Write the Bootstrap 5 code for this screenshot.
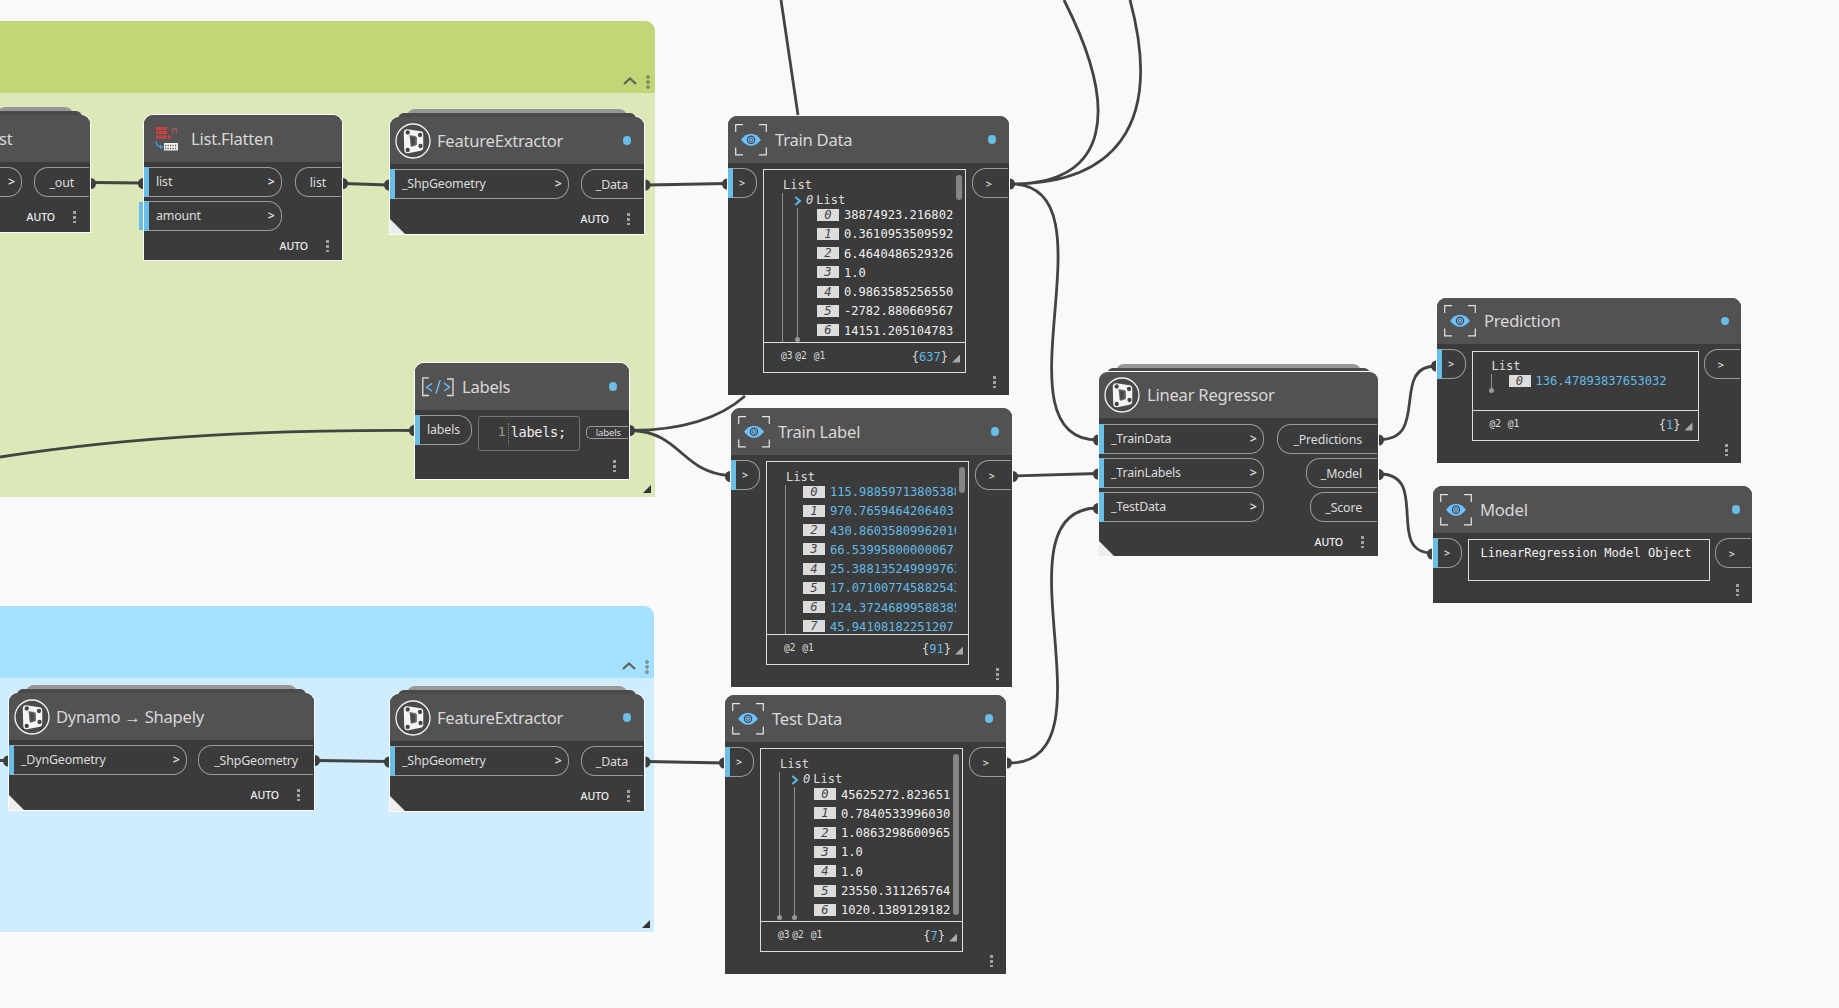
<!DOCTYPE html>
<html lang="en">
<head>
<meta charset="utf-8">
<title>Dynamo graph</title>
<link href="https://cdn.jsdelivr.net/npm/bootstrap@5.3.0/dist/css/bootstrap.min.css" rel="stylesheet">
<style>
body{background:#f9f9f9;font-family:"Noto Sans","Open Sans",sans-serif;overflow:hidden}
.board{width:1839px;height:1008px;background:#f9f9f9}
.mono{font-family:"DejaVu Sans Mono","Liberation Mono",monospace}
/* groups */
.zone{position:absolute;left:0;border-radius:0 10px 0 0;overflow:hidden}
.zone-head{height:72px;padding:0 5px 4px 0;gap:9px}
.zone-a{top:21px;width:655px;height:476px;background:#dce8b8}
.zone-a .zone-head{background:#c1d676}
.zone-b{top:606px;width:654px;height:326px;background:#d0edff}
.zone-b .zone-head{background:#a4e1ff}
.zone-grip{position:absolute;right:4px;bottom:4px;width:8px;height:8px;background:#333;clip-path:polygon(100% 0,100% 100%,0 100%)}
.wires{position:absolute;left:0;top:0;fill:none;stroke:#434343;stroke-width:2.8}
.wires .ends{fill:#3f3f3f;stroke:none}
/* nodes */
.node{position:absolute;background:#3b3b3b;color:#dcdcdc;border-radius:9px 9px 0 0;font-size:12.4px;letter-spacing:-.15px}
.node-lit{box-shadow:0 0 0 1px #fcfcfc}
.node-head{height:47px;background:#525252;border-radius:9px 9px 0 0;padding:0 13px 0 7px;position:relative}
.node-name{font-size:16.6px;letter-spacing:-.25px;line-height:24px;white-space:nowrap;color:#d8d8d8}
.dot{width:8.5px;height:8.5px;border-radius:50%;background:#69bde6}
.tabs::before,.tabs::after{content:"";position:absolute;border-radius:8px 8px 0 0;z-index:-1}
.tabs{isolation:isolate}
.tabs::before{left:17px;right:17px;top:-8px;height:8px;background:#979797}
.tabs::after{left:8px;right:8px;top:-4px;height:6px;background:#4b4b4b}
.fold{position:absolute;left:0;bottom:0;width:15px;height:15px;background:#eee;clip-path:polygon(0 0,100% 100%,0 100%)}
.port{height:30px;border:1px solid #9a9a9a;line-height:27px;position:relative;white-space:nowrap}
.p-in{border-left:0;border-radius:0 14px 14px 0;padding:0 6px 0 12px}
.p-in::before{content:"";position:absolute;left:0;top:-1px;bottom:-1px;width:5px;background:#69bde6}
.p-out{border-right:0;border-radius:14px 0 0 14px;margin-right:1px;padding-right:15px;text-align:right;line-height:29px}
.gt{font-size:12.5px;font-weight:600;letter-spacing:0}
.tiny{width:29px;padding:0 0 0 11px}
.tiny-out{width:36px;padding:0 16px 0 0}
.tiny .gt,.tiny-out .gt{font-size:11px}
.ports{padding-top:5px}
.auto{font-size:10.6px;font-weight:500;color:#eee;letter-spacing:-.1px;line-height:14px}
.dots{width:3px;height:13px;background:radial-gradient(circle,#a3a3a3 1.4px,transparent 1.8px) 0 0/3px 5px}
.foot{padding:13px 14px 0 0;gap:18px}
.foot-alone{position:absolute;right:13px;bottom:7px}
/* watch previews */
.view{border:1px solid #dedede;position:relative;font-size:12.1px;letter-spacing:0;margin-top:1px}
.view-main{overflow:hidden;position:relative;padding-top:8px}
.view-foot{border-top:1px solid #dedede;padding:0 5px 2px 17px;height:30px;font-size:12px}
.levels{font-size:9.6px;letter-spacing:-.1px;gap:3px}
.ln{line-height:15px;height:15px}
.kin{border-left:1px solid #8f8f8f;margin-left:18px;position:relative}
.stop::after{content:"";position:absolute;left:-3px;bottom:-4px;width:5px;height:5px;border-radius:50%;background:#999}
.item{height:19.27px;line-height:14px;white-space:nowrap;color:#f0f0f0}
.idx{width:22px;height:12px;line-height:12px;margin-top:.5px;background:#dcdcdc;color:#444;font-style:italic;text-align:center;margin-right:5px;flex:none}
.num .item{color:#62bbe8}
.blue{color:#62bbe8}
.clip{width:126px;overflow:hidden}
.bar{position:absolute;width:6px;right:3px;border-radius:3px;background:#858585}
.corner{width:8px;height:8px;background:#aaa;clip-path:polygon(100% 0,100% 100%,0 100%)}
.watch{width:281px;height:279px}
.watch .view{width:203px;height:204px}
.watch .view-main{height:172px}
/* places on the canvas */
#n-st{left:-20px;top:115px;width:110px;height:117px}
#n-flat{left:144px;top:115px;width:198px;height:145px}
#n-fe1{left:390px;top:117px;width:254px;height:117px}
#n-fe2{left:390px;top:694px;width:254px;height:117px}
#n-dyn{left:9px;top:693px;width:305px;height:117px}
#n-lab{left:415px;top:363px;width:214px;height:116px}
#n-tr{left:728px;top:116px}
#n-tl{left:731px;top:408px}
#n-te{left:725px;top:695px}
#n-lr{left:1099px;top:372px;width:279px;height:184px}
#n-pr{left:1437px;top:298px;width:304px;height:165px}
#n-mo{left:1433px;top:486px;width:319px;height:117px}
#n-lr .node-head{border-top:1px solid #fcfcfc;margin-top:-1px}
#n-pr .view{width:227px;height:90px}
#n-pr .view-main{height:58px}
#n-mo .view{width:242px;height:42px;padding:6px 0 0 12px;color:#f0f0f0;line-height:15px}
</style>
<script src="https://cdn.jsdelivr.net/npm/bootstrap@5.3.0/dist/js/bootstrap.bundle.min.js"></script>
</head>
<body>
<svg width="0" height="0" class="position-absolute">
<symbol id="i-dyn" viewBox="0 0 36 36"><circle cx="18" cy="18" r="17" fill="#4a4a4a" stroke="#f4f4f4" stroke-width="1.3"/><path d="M12 9.5L25 11.5V24.5L12.500 27Z" fill="none" stroke="#f4f4f4" stroke-width="6.5" stroke-linejoin="round"/><path d="M14.500 12.500L21 13.500V22L16.500 23.500" fill="#555" stroke="#777" stroke-width=".8"/><path d="M16 14.500H19.500V21.500H16Z" fill="#4a4a4a"/><g fill="#f4f4f4" stroke="#444" stroke-width="1.300"><circle cx="12.700" cy="9.500" r="1.500" fill="#444"/><circle cx="25" cy="12" r="1.500" fill="#444"/><circle cx="25.500" cy="23" r="1.500" fill="#444"/><circle cx="12.700" cy="27" r="1.500" fill="#444"/></g></symbol>
<symbol id="i-eye" viewBox="0 0 32 32"><path d="M.7 8V.7H8M24 .7H31.300V8M31.300 23.500V30.800H24M8 30.800H.7V23.500" fill="none" stroke="#e4e4e4" stroke-width="1.200"/><path d="M6 15.700Q10.500 9.700 16 9.700T26 15.700Q21.500 21.700 16 21.700T6 15.700Z" fill="#6ec1ff"/><circle cx="16" cy="15.700" r="3.600" fill="none" stroke="#444" stroke-width="1.200"/><circle cx="16" cy="15.700" r="1.700" fill="none" stroke="#555" stroke-width=".9"/></symbol>
<symbol id="i-code" viewBox="0 0 32 20"><path d="M7 .8H.8V18.500H7M25 2H31V18.500H25" fill="none" stroke="#ddd" stroke-width="1.300"/><path d="M10 6.500L4.500 10.300L10 14M22 6L27.500 10.300L22 14M18.200 3L14 16.500" fill="none" stroke="#6ec1ff" stroke-width="1.300"/></symbol>
<symbol id="i-flat" viewBox="0 0 24 24"><path d="M1 1.500H12M1 5.500H12M1 10H12" stroke="#cf4040" stroke-width="3"/><path d="M3 1.500H3.800M7 1.500H7.800M11 1.500H11.300M3 5.500H3.800M7 5.500H7.800M3 10H3.800M7 10H7.800" stroke="#5d4444" stroke-width="1.200"/><path d="M13 8.500H16V11.500H13Z" fill="#cf4040"/><path d="M17.500 7V1.800H21.300V7" fill="none" stroke="#9a5656" stroke-width="1.400"/><path d="M1 14Q1.500 20 7 20" fill="none" stroke="#4d93cf" stroke-width="1.500"/><path d="M5 17.500L8.500 20L5 22.500Z" fill="#4d93cf"/><path d="M9 16H23V23.500H9Z" fill="#f2f2f2"/><path d="M10 18.500H22M10 21.500H22" stroke="#555" stroke-width="1.600" stroke-dasharray="1.200 1.300"/></symbol>
<symbol id="i-up" viewBox="0 0 14 8"><path d="M1 7L7 1.500L13 7" fill="none" stroke="#606060" stroke-width="2.200"/></symbol>
<symbol id="i-grip" viewBox="0 0 4 14"><g fill="none" stroke="#5a5a5a" stroke-width=".9"><circle cx="2" cy="2" r="1.300"/><circle cx="2" cy="7" r="1.300"/><circle cx="2" cy="12" r="1.300"/></g></symbol>
<symbol id="i-chev" viewBox="0 0 8 10"><path d="M1.300 1L6 5L1.300 9" fill="none" stroke="#5cb8e6" stroke-width="2"/></symbol>
</svg>

<main class="board position-relative overflow-hidden">
  <section class="zone zone-a"><div class="zone-head d-flex justify-content-end align-items-end"><svg width="14" height="8" class="mb-1"><use href="#i-up"/></svg><svg width="4" height="14"><use href="#i-grip"/></svg></div><i class="zone-grip"></i></section>
  <section class="zone zone-b"><div class="zone-head d-flex justify-content-end align-items-end"><svg width="14" height="8" class="mb-1"><use href="#i-up"/></svg><svg width="4" height="14"><use href="#i-grip"/></svg></div><i class="zone-grip"></i></section>

  <svg class="wires" width="1839" height="1008">
    <path d="M93 182.500L142 183M344 183.500L388 185M647 185L727 183.500M0 457C140 435 280 430 413 430.500M632 430.500C680 430 718 420 745 396M632 430.500C680 432 683 473 729 475.500M0 760.500H8M317 760.500L388 761.500M647 761.500L724 763M781 0L798 115M1011 184C1120 184 990 440 1098 440M1011 184C1110 184 1120 110 1064 0M1011 184C1110 184 1165 130 1130 0M1014 476L1098 473.500M1009 763C1120 763 990 508 1098 508M1380 439.500C1430 439.500 1390 366 1436 366M1380 474C1430 474 1385 553 1432 553"/>
    <g class="ends">
      <path d="M91 178A5 5.500 0 0 1 91 189M343 178A5 5.500 0 0 1 343 189M645.500 179.500A5 5.500 0 0 1 645.500 190.500M630 425A5 5.500 0 0 1 630 436M315 755A5 5.500 0 0 1 315 766M645.500 756.500A5 5.500 0 0 1 645.500 767.500M1010 178.500A5 5.500 0 0 1 1010 189.500M1013 471A5 5.500 0 0 1 1013 482M1007 757.500A5 5.500 0 0 1 1007 768.500M1379 434.500A5 5.500 0 0 1 1379 445.500M1379 469A5 5.500 0 0 1 1379 480"/>
      <path d="M143 178A5 5.500 0 0 0 143 189M389 179.500A5 5.500 0 0 0 389 190.500M727 178.500A5 5.500 0 0 0 727 189.500M414 425A5 5.500 0 0 0 414 436M730 471A5 5.500 0 0 0 730 482M8 755.500A5 5.500 0 0 0 8 766.500M389 756.500A5 5.500 0 0 0 389 767.500M724 757.500A5 5.500 0 0 0 724 768.500M1098 434.500A5 5.500 0 0 0 1098 445.500M1098 468.500A5 5.500 0 0 0 1098 479.500M1098 503A5 5.500 0 0 0 1098 514M1436 360.500A5 5.500 0 0 0 1436 371.500M1432 548.500A5 5.500 0 0 0 1432 559.500"/>
      <path d="M139 202H143V230H139Z" fill="#69bde6"/>
    </g>
  </svg>

  <article class="node node-lit tabs" id="n-st">
    <header class="node-head d-flex align-items-center"><span class="node-name ms-2 ps-1">st</span></header>
    <div class="ports d-flex justify-content-between">
      <div class="port p-in ps-4" style="width:42px"><span class="gt ms-1">&gt;</span></div>
      <div class="port p-out" style="width:55px">_out</div>
    </div>
    <footer class="foot d-flex justify-content-end"><span class="auto">AUTO</span><i class="dots"></i></footer>
  </article>

  <article class="node node-lit" id="n-flat">
    <header class="node-head d-flex align-items-center"><svg width="24" height="24" class="ms-1"><use href="#i-flat"/></svg><span class="node-name" style="margin-left:12px">List.Flatten</span></header>
    <div class="ports d-flex justify-content-between">
      <div class="d-flex flex-column gap-1">
        <div class="port p-in d-flex justify-content-between" style="width:138px">list<span class="gt">&gt;</span></div>
        <div class="port p-in d-flex justify-content-between" style="width:138px">amount<span class="gt">&gt;</span></div>
      </div>
      <div class="port p-out" style="width:46px">list</div>
    </div>
    <footer class="foot d-flex justify-content-end" style="padding-top:8px;padding-right:13px"><span class="auto">AUTO</span><i class="dots"></i></footer>
  </article>

  <article class="node node-lit tabs" id="n-fe1">
    <header class="node-head d-flex align-items-center"><svg width="36" height="36" style="margin-left:-2px"><use href="#i-dyn"/></svg><span class="node-name" style="margin-left:6px">FeatureExtractor</span><i class="dot ms-auto"></i></header>
    <div class="ports d-flex justify-content-between">
      <div class="port p-in d-flex justify-content-between" style="width:179px">_ShpGeometry<span class="gt">&gt;</span></div>
      <div class="port p-out" style="width:62px">_Data</div>
    </div>
    <footer class="foot d-flex justify-content-end"><span class="auto">AUTO</span><i class="dots"></i></footer><i class="fold"></i>
  </article>

  <article class="node node-lit" id="n-lab">
    <header class="node-head d-flex align-items-center" style="padding-right:12px"><svg width="32" height="20"><use href="#i-code"/></svg><span class="node-name" style="margin-left:8px">Labels</span><i class="dot ms-auto"></i></header>
    <div class="ports d-flex">
      <div class="port p-in" style="width:57px">labels</div>
      <div class="mono d-flex border-secondary" style="margin:1px 0 0 6px;width:103px;height:35px;border:1px solid #8d8d8d;border-radius:3px;padding:6px 0 0 19px;font-size:14.400px;line-height:18px;letter-spacing:.1px"><span style="color:#a09a8c;font-size:13px">1</span><span style="border-left:1px dotted #888;margin-left:2px;padding-left:2px;height:22px;font-size:13.600px;letter-spacing:-.3px;color:#eee">labels;</span></div>
      <div class="port p-out" style="margin:11px 1px 0 6px;width:42px;height:13px;line-height:11px;font-size:9.600px;border-radius:5px 0 0 5px;padding-right:7px">labels</div>
    </div>
    <i class="dots foot-alone"></i>
  </article>

  <article class="node node-lit tabs" id="n-dyn">
    <header class="node-head d-flex align-items-center"><svg width="36" height="36" style="margin-left:-2px"><use href="#i-dyn"/></svg><span class="node-name" style="margin-left:6px">Dynamo → Shapely</span></header>
    <div class="ports d-flex justify-content-between">
      <div class="port p-in d-flex justify-content-between" style="width:178px">_DynGeometry<span class="gt">&gt;</span></div>
      <div class="port p-out" style="width:115px">_ShpGeometry</div>
    </div>
    <footer class="foot d-flex justify-content-end"><span class="auto">AUTO</span><i class="dots"></i></footer><i class="fold"></i>
  </article>

  <article class="node node-lit tabs" id="n-fe2">
    <header class="node-head d-flex align-items-center"><svg width="36" height="36" style="margin-left:-2px"><use href="#i-dyn"/></svg><span class="node-name" style="margin-left:6px">FeatureExtractor</span><i class="dot ms-auto"></i></header>
    <div class="ports d-flex justify-content-between">
      <div class="port p-in d-flex justify-content-between" style="width:179px">_ShpGeometry<span class="gt">&gt;</span></div>
      <div class="port p-out" style="width:62px">_Data</div>
    </div>
    <footer class="foot d-flex justify-content-end"><span class="auto">AUTO</span><i class="dots"></i></footer><i class="fold"></i>
  </article>

  <article class="node watch" id="n-tr">
    <header class="node-head d-flex align-items-center"><svg width="32" height="32"><use href="#i-eye"/></svg><span class="node-name ms-2">Train Data</span><i class="dot ms-auto"></i></header>
    <div class="ports d-flex justify-content-between">
      <div class="port p-in tiny"><span class="gt">&gt;</span></div>
      <div class="view mono">
        <div class="view-main">
          <div class="ln" style="padding-left:19px">List</div>
          <div class="kin">
            <div class="ln d-flex align-items-center" style="padding-left:11px"><svg width="8" height="10"><use href="#i-chev"/></svg><i style="margin:0 3px 0 4px">0</i>List</div>
            <div class="kin stop" style="margin-left:14px;padding-left:19px;height:130px">
              <div class="item d-flex"><span class="idx">0</span>38874923.216802</div>
              <div class="item d-flex"><span class="idx">1</span>0.3610953509592</div>
              <div class="item d-flex"><span class="idx">2</span>6.4640486529326</div>
              <div class="item d-flex"><span class="idx">3</span>1.0</div>
              <div class="item d-flex"><span class="idx">4</span>0.9863585256550</div>
              <div class="item d-flex"><span class="idx">5</span>-2782.880669567</div>
              <div class="item d-flex"><span class="idx">6</span>14151.205104783</div>
            </div>
            <div style="height:6px"></div>
          </div>
          <i class="bar" style="top:5px;height:25px"></i>
        </div>
        <div class="view-foot d-flex align-items-center"><span class="levels d-flex"><span>@3</span><span>@2</span><span class="ms-1">@1</span></span><span class="ms-auto">{<span class="blue">637</span>}</span><i class="corner ms-1 mt-1"></i></div>
      </div>
      <div class="port p-out tiny-out"><span class="gt">&gt;</span></div>
    </div>
    <i class="dots foot-alone"></i>
  </article>

  <article class="node watch" id="n-tl">
    <header class="node-head d-flex align-items-center"><svg width="32" height="32"><use href="#i-eye"/></svg><span class="node-name ms-2">Train Label</span><i class="dot ms-auto"></i></header>
    <div class="ports d-flex justify-content-between">
      <div class="port p-in tiny"><span class="gt">&gt;</span></div>
      <div class="view mono">
        <div class="view-main num">
          <div class="ln" style="padding-left:19px">List</div>
          <div class="kin" style="padding-left:17px">
            <div class="item d-flex"><span class="idx">0</span><span class="clip">115.98859713805388</span></div>
            <div class="item d-flex"><span class="idx">1</span><span class="clip">970.7659464206403</span></div>
            <div class="item d-flex"><span class="idx">2</span><span class="clip">430.86035809962010</span></div>
            <div class="item d-flex"><span class="idx">3</span><span class="clip">66.53995800000067</span></div>
            <div class="item d-flex"><span class="idx">4</span><span class="clip">25.388135249999763</span></div>
            <div class="item d-flex"><span class="idx">5</span><span class="clip">17.071007745882543</span></div>
            <div class="item d-flex"><span class="idx">6</span><span class="clip">124.37246899588385</span></div>
            <div class="item d-flex"><span class="idx">7</span><span class="clip">45.94108182251207</span></div>
          </div>
          <i class="bar" style="top:5px;height:26px"></i>
        </div>
        <div class="view-foot d-flex align-items-center"><span class="levels d-flex"><span>@2</span><span class="ms-1">@1</span></span><span class="ms-auto">{<span class="blue">91</span>}</span><i class="corner ms-1 mt-1"></i></div>
      </div>
      <div class="port p-out tiny-out"><span class="gt">&gt;</span></div>
    </div>
    <i class="dots foot-alone"></i>
  </article>

  <article class="node watch" id="n-te">
    <header class="node-head d-flex align-items-center"><svg width="32" height="32"><use href="#i-eye"/></svg><span class="node-name ms-2">Test Data</span><i class="dot ms-auto"></i></header>
    <div class="ports d-flex justify-content-between">
      <div class="port p-in tiny"><span class="gt">&gt;</span></div>
      <div class="view mono">
        <div class="view-main">
          <div class="ln" style="padding-left:19px">List</div>
          <div class="kin stop" style="height:144px">
            <div class="ln d-flex align-items-center" style="padding-left:11px"><svg width="8" height="10"><use href="#i-chev"/></svg><i style="margin:0 3px 0 4px">0</i>List</div>
            <div class="kin stop" style="margin-left:14px;padding-left:19px;padding-top:.7px;height:129px">
              <div class="item d-flex"><span class="idx">0</span>45625272.823651</div>
              <div class="item d-flex"><span class="idx">1</span>0.7840533996030</div>
              <div class="item d-flex"><span class="idx">2</span>1.0863298600965</div>
              <div class="item d-flex"><span class="idx">3</span>1.0</div>
              <div class="item d-flex"><span class="idx">4</span>1.0</div>
              <div class="item d-flex"><span class="idx">5</span>23550.311265764</div>
              <div class="item d-flex"><span class="idx">6</span>1020.1389129182</div>
            </div>
          </div>
          <i class="bar" style="top:5px;height:161px"></i>
        </div>
        <div class="view-foot d-flex align-items-center"><span class="levels d-flex"><span>@3</span><span>@2</span><span class="ms-1">@1</span></span><span class="ms-auto">{<span class="blue">7</span>}</span><i class="corner ms-1 mt-1"></i></div>
      </div>
      <div class="port p-out tiny-out"><span class="gt">&gt;</span></div>
    </div>
    <i class="dots foot-alone"></i>
  </article>

  <article class="node tabs" id="n-lr">
    <header class="node-head d-flex align-items-center"><svg width="36" height="36" style="margin-left:-2px"><use href="#i-dyn"/></svg><span class="node-name" style="margin-left:7px">Linear Regressor</span></header>
    <div class="ports d-flex justify-content-between">
      <div class="d-flex flex-column gap-1" style="padding-top:1px">
        <div class="port p-in d-flex justify-content-between" style="width:165px">_TrainData<span class="gt">&gt;</span></div>
        <div class="port p-in d-flex justify-content-between" style="width:165px">_TrainLabels<span class="gt">&gt;</span></div>
        <div class="port p-in d-flex justify-content-between" style="width:165px">_TestData<span class="gt">&gt;</span></div>
      </div>
      <div class="d-flex flex-column gap-1 align-items-end" style="padding-top:1px">
        <div class="port p-out" style="width:100px">_Predictions</div>
        <div class="port p-out" style="width:71px">_Model</div>
        <div class="port p-out" style="width:67px">_Score</div>
      </div>
    </div>
    <footer class="foot d-flex justify-content-end"><span class="auto">AUTO</span><i class="dots"></i></footer><i class="fold"></i>
  </article>

  <article class="node" id="n-pr">
    <header class="node-head d-flex align-items-center" style="height:46px"><svg width="32" height="32"><use href="#i-eye"/></svg><span class="node-name ms-2">Prediction</span><i class="dot ms-auto" style="margin-right:-1px"></i></header>
    <div class="ports d-flex justify-content-between">
      <div class="port p-in tiny"><span class="gt">&gt;</span></div>
      <div class="view mono" style="margin-top:2px">
        <div class="view-main num">
          <div class="ln" style="padding-left:19px;margin-top:-1px">List</div>
          <div class="kin stop" style="padding-left:17px;height:15px"><div class="item d-flex"><span class="idx">0</span>136.47893837653032</div></div>
        </div>
        <div class="view-foot d-flex align-items-center"><span class="levels d-flex"><span>@2</span><span class="ms-1">@1</span></span><span class="ms-auto">{<span class="blue">1</span>}</span><i class="corner ms-1 mt-1"></i></div>
      </div>
      <div class="port p-out tiny-out"><span class="gt">&gt;</span></div>
    </div>
    <i class="dots foot-alone"></i>
  </article>

  <article class="node" id="n-mo">
    <header class="node-head d-flex align-items-center"><svg width="32" height="32"><use href="#i-eye"/></svg><span class="node-name ms-2">Model</span><i class="dot ms-auto" style="margin-right:-1px"></i></header>
    <div class="ports d-flex justify-content-between">
      <div class="port p-in tiny"><span class="gt">&gt;</span></div>
      <div class="view mono">LinearRegression Model Object</div>
      <div class="port p-out tiny-out"><span class="gt">&gt;</span></div>
    </div>
    <i class="dots foot-alone"></i>
  </article>
</main>
</body>
</html>
